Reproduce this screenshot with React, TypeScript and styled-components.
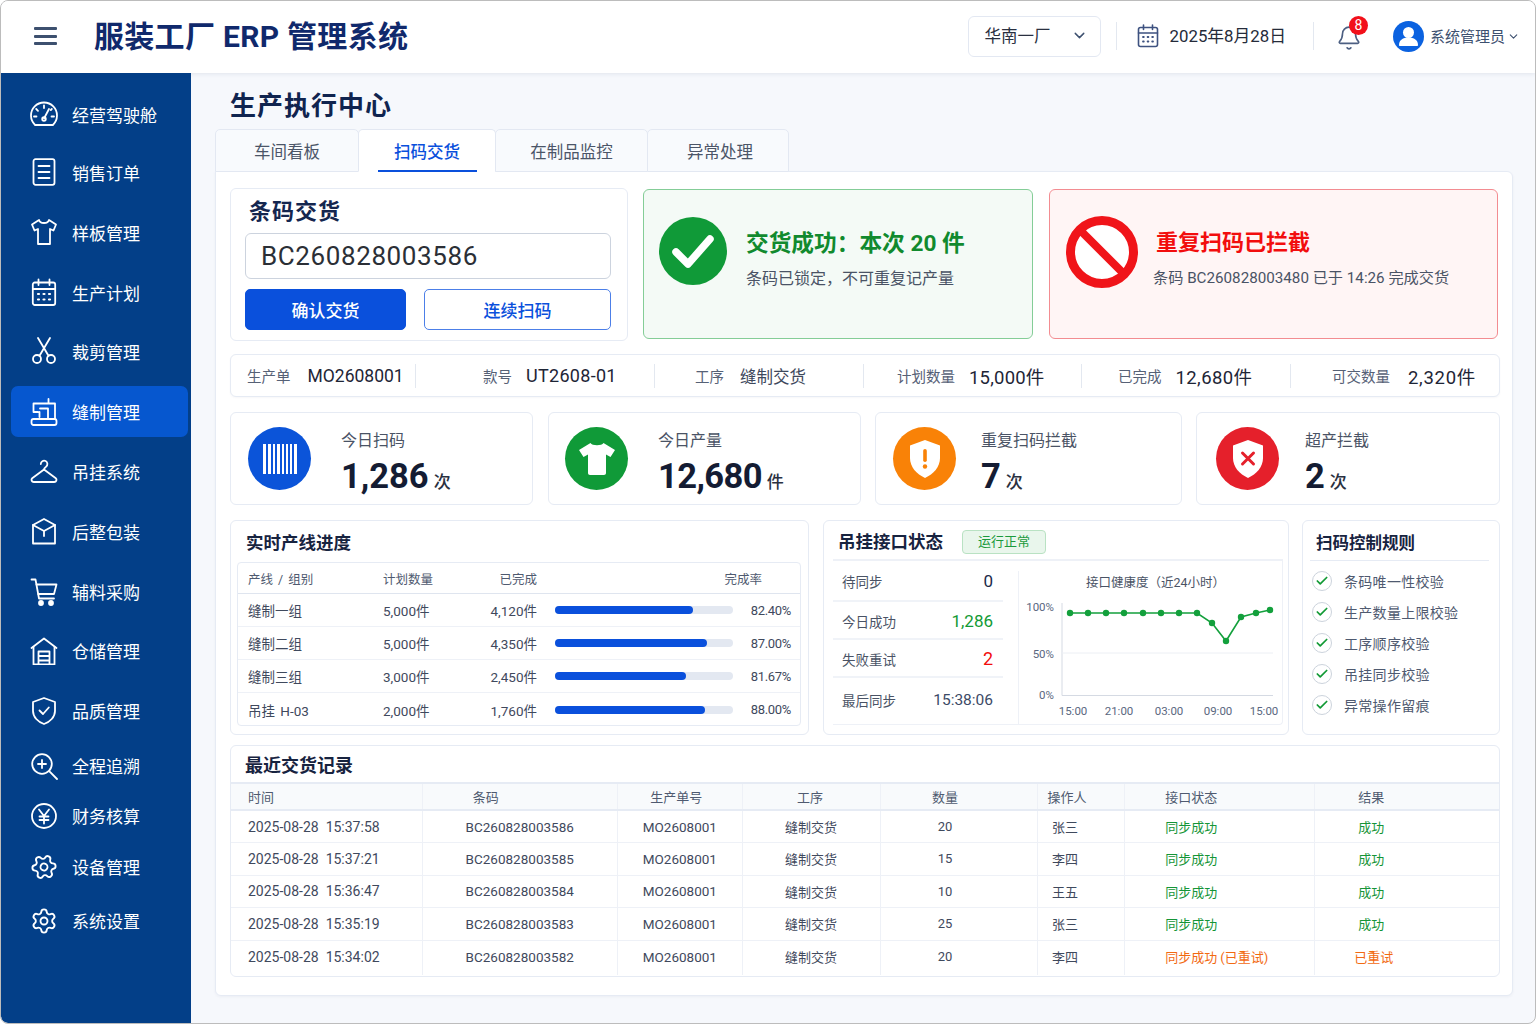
import React from "react";
import styled, { createGlobalStyle } from "styled-components";
import { Bell, ChevronDown, Check, Settings } from "lucide-react";

const GlobalStyle = createGlobalStyle`
  * {
    box-sizing: border-box;
  }
  body {
    margin: 0;
    background: #ffffff;
    font-family: Roboto, "Noto Sans CJK SC", sans-serif;
    color: #1f2a44;
  }
`;

const Frame = styled.div`
  width: 1536px;
  height: 1024px;
  border: 1px solid #bcbcbc;
  border-radius: 8px;
  overflow: hidden;
  display: flex;
  flex-direction: column;
  background: #f6f8fc;
`;

const Header = styled.header`
  height: 72px;
  flex: none;
  display: flex;
  align-items: center;
  padding: 0 15px 2px 33px;
  background: #ffffff;
  box-shadow: 0 1px 4px rgba(40, 60, 100, 0.1);
  position: relative;
  z-index: 1;
`;

const Hamburger = styled.div`
  width: 23px;
  height: 18px;
  display: flex;
  flex-direction: column;
  justify-content: space-between;
  span {
    height: 3px;
    border-radius: 1px;
    background: #3d506f;
  }
`;

const AppTitle = styled.h1`
  margin: 0 0 4px 37px;
  font-size: 30px;
  font-weight: 700;
  letter-spacing: 0.3px;
  color: #10296c;
  white-space: pre;
`;

const HeaderRight = styled.div`
  margin-left: auto;
  display: flex;
  align-items: center;
`;

const PlantSelect = styled.div`
  width: 133px;
  height: 41px;
  display: flex;
  align-items: center;
  justify-content: space-between;
  padding: 0 12px 2px 16px;
  border: 1px solid #e3e8f2;
  border-radius: 6px;
  font-size: 16.5px;
  color: #2a3040;
  svg {
    color: #3d506f;
  }
`;

const HeaderDivider = styled.div<{ $left: number; $right: number }>`
  width: 1px;
  height: 28px;
  background: #e3e8f0;
  margin: 0 ${(p) => p.$right}px 0 ${(p) => p.$left}px;
`;

const DateText = styled.span`
  margin: 0 0 2px 11px;
  font-size: 16.8px;
  color: #252b3a;
  white-space: nowrap;
`;

const BellWrap = styled.div`
  position: relative;
  width: 24px;
  height: 28px;
  margin-top: 5px;
  color: #4c5f82;
`;

const BellBadge = styled.span`
  position: absolute;
  top: -9px;
  left: 13px;
  width: 19px;
  height: 19px;
  border-radius: 50%;
  background: #f2101a;
  color: #ffffff;
  font-size: 14px;
  line-height: 19px;
  text-align: center;
`;

const UserAvatar = styled.svg`
  margin-left: 33px;
  flex: none;
`;

const UserName = styled.span`
  margin: 0 2px 2px 6px;
  font-size: 15px;
  color: #3d506f;
  white-space: nowrap;
`;

const Body = styled.div`
  flex: 1;
  display: flex;
  min-height: 0;
`;

const Sidebar = styled.nav`
  width: 190px;
  flex: none;
  padding-top: 16px;
  background: #033f88;
  border-bottom-left-radius: 7px;
`;

const NavItem = styled.div<{ $gap: number; $active?: boolean }>`
  height: ${(p) => (p.$active ? 51 : 50)}px;
  margin: ${(p) => p.$gap}px 3px 0 10px;
  padding-left: 19px;
  display: flex;
  align-items: center;
  gap: 14px;
  border-radius: 7px;
  background: ${(p) => (p.$active ? "#0657cf" : "transparent")};
  color: #ffffff;
  font-size: 17px;
  svg {
    flex: none;
  }
`;

const Main = styled.main`
  flex: 1;
  min-width: 0;
  padding: 17px 22px 0 24px;
`;

const PageTitle = styled.h2`
  margin: 0 0 7px 15px;
  font-size: 26px;
  line-height: 32px;
  font-weight: 700;
  letter-spacing: 1px;
  color: #10244f;
`;

const Tabs = styled.div`
  display: flex;
  margin-bottom: -1px;
  position: relative;
  z-index: 1;
`;

const Tab = styled.div<{ $width: number; $active?: boolean }>`
  width: ${(p) => p.$width}px;
  height: 43px;
  position: relative;
  display: flex;
  align-items: center;
  justify-content: center;
  margin-left: -1px;
  border: 1px solid #e3e8f2;
  border-bottom: ${(p) => (p.$active ? "1px solid #ffffff" : "1px solid #e3e8f2")};
  border-radius: 5px 5px 0 0;
  background: ${(p) => (p.$active ? "#ffffff" : "#f8fafd")};
  color: ${(p) => (p.$active ? "#0a50dc" : "#4b5568")};
  font-size: 16.5px;
  font-weight: ${(p) => (p.$active ? 500 : 400)};
  &::after {
    content: "";
    display: ${(p) => (p.$active ? "block" : "none")};
    position: absolute;
    left: 19px;
    right: 18px;
    bottom: -1px;
    height: 2px;
    background: #0a50dc;
  }
  &:first-child {
    margin-left: 0;
  }
  &:last-child {
    padding-left: 4px;
  }
`;

const ContentCard = styled.section`
  height: 825px;
  padding: 16px 12px 0 14px;
  background: #ffffff;
  border: 1px solid #e6ebf4;
  border-radius: 0 6px 6px 6px;
  box-shadow: 0 1px 3px rgba(40, 60, 100, 0.05);
`;

const TopRow = styled.div`
  display: grid;
  grid-template-columns: 398px 391px 449px;
  column-gap: 15px;
  height: 153px;
  margin-bottom: 13px;
  & > :nth-child(2) {
    margin-right: 1px;
  }
`;

const Panel = styled.div`
  background: #ffffff;
  border: 1px solid #e6ebf4;
  border-radius: 6px;
`;

const ScanPanel = styled(Panel)`
  padding: 0 16px 0 14px;
`;

const ScanTitle = styled.div`
  margin-left: 4px;
  height: 44px;
  line-height: 46px;
  font-size: 22px;
  font-weight: 700;
  letter-spacing: 1px;
  color: #14264f;
`;

const BarcodeInput = styled.input`
  display: block;
  width: 100%;
  height: 46px;
  padding: 0 15px;
  border: 1px solid #ccd3de;
  border-radius: 6px;
  outline: none;
  font-family: inherit;
  font-size: 26px;
  letter-spacing: 0.6px;
  color: #2b2f36;
`;

const ButtonRow = styled.div`
  display: grid;
  grid-template-columns: 161px 187px;
  column-gap: 18px;
  margin-top: 10px;
`;

const ActionButton = styled.button<{ $primary?: boolean }>`
  height: 41px;
  padding-bottom: 2px;
  border-radius: 5px;
  border: 1px solid ${(p) => (p.$primary ? "#0a50dc" : "#4c7fe8")};
  background: ${(p) => (p.$primary ? "#0a50dc" : "#ffffff")};
  color: ${(p) => (p.$primary ? "#ffffff" : "#0a50dc")};
  font-family: inherit;
  font-size: 17px;
  font-weight: 500;
`;

const ResultPanel = styled.div<{ $tone: "ok" | "bad" }>`
  height: 150px;
  margin-top: 1px;
  display: flex;
  align-items: flex-start;
  padding: ${(p) => (p.$tone === "ok" ? "27px 0 0 15px" : "25px 0 0 16px")};
  gap: ${(p) => (p.$tone === "ok" ? 19 : 15)}px;
  border-radius: 6px;
  border: 1px solid ${(p) => (p.$tone === "ok" ? "#84cd97" : "#f38c91")};
  background: ${(p) => (p.$tone === "ok" ? "#f4faf6" : "#fff5f5")};
`;

const ResultText = styled.div<{ $offset: number }>`
  margin-top: ${(p) => p.$offset}px;
`;

const ResultTitle = styled.div<{ $tone: "ok" | "bad" }>`
  font-size: ${(p) => (p.$tone === "ok" ? 22.7 : 22)}px;
  line-height: 32px;
  font-weight: 700;
  margin-left: ${(p) => (p.$tone === "ok" ? 0 : 3)}px;
  color: ${(p) => (p.$tone === "ok" ? "#118a2e" : "#f20d0d")};
  white-space: pre;
`;

const ResultSub = styled.div<{ $size: number }>`
  margin-top: 8px;
  font-size: ${(p) => p.$size}px;
  line-height: 22px;
  color: #4a5365;
  white-space: pre;
`;

const MetaBar = styled(Panel)`
  height: 43px;
  margin-bottom: 15px;
  display: grid;
  grid-template-columns: 184px 239px 209px 218px 209px 1fr;
  align-items: center;
  box-shadow: 0 1px 2px rgba(40, 60, 100, 0.04);
`;

const MetaCell = styled.div<{ $pad: number; $gap: number; $first?: boolean }>`
  height: 24px;
  display: flex;
  align-items: center;
  padding-left: ${(p) => p.$pad}px;
  gap: ${(p) => p.$gap}px;
  border-left: ${(p) => (p.$first ? "none" : "1px solid #e3e8f0")};
  white-space: nowrap;
`;

const MetaLabel = styled.span`
  font-size: 14.5px;
  color: #566176;
`;

const MetaValue = styled.span<{ $size: number; $spread?: number }>`
  font-size: ${(p) => p.$size}px;
  letter-spacing: ${(p) => p.$spread ?? 0}px;
  color: ${(p) => (p.$size < 17 ? "#3e485c" : "#1e2536")};
`;

const KpiRow = styled.div`
  display: grid;
  grid-template-columns: 304px 313px 307px 304px;
  column-gap: 14px;
  margin-bottom: 15px;
  & > :first-child {
    margin-right: 1px;
  }
`;

const KpiCard = styled(Panel)<{ $pad: number; $gap: number }>`
  height: 93px;
  display: flex;
  align-items: center;
  padding-left: ${(p) => p.$pad}px;
  gap: ${(p) => p.$gap}px;
`;

const KpiCircle = styled.div<{ $color: string }>`
  width: 63px;
  height: 63px;
  flex: none;
  border-radius: 50%;
  background: ${(p) => p.$color};
  display: flex;
  align-items: center;
  justify-content: center;
`;

const KpiText = styled.div`
  margin-top: 16px;
`;

const KpiLabel = styled.div`
  font-size: 16px;
  line-height: 22px;
  color: #4a5365;
`;

const KpiValue = styled.div<{ $tight?: boolean }>`
  display: flex;
  align-items: baseline;
  gap: 5px;
  margin-top: 3px;
  font-size: 34.5px;
  line-height: 42px;
  font-weight: 700;
  letter-spacing: ${(p) => (p.$tight ? -0.6 : 0)}px;
  color: #141c33;
  span {
    font-size: 17px;
    font-weight: 500;
    letter-spacing: 0;
    color: #2a3040;
  }
`;

const MiddleRow = styled.div`
  display: grid;
  grid-template-columns: 580px 466px 198px;
  column-gap: 13px;
  height: 215px;
  margin-bottom: 10px;
  & > :first-child {
    margin-right: 1px;
  }
`;

const SectionTitle = styled.div`
  height: 41px;
  line-height: 44px;
  font-size: 17.5px;
  font-weight: 700;
  color: #17233f;
  white-space: nowrap;
`;

const ProgressCard = styled(Panel)`
  padding: 0 7px 0 6px;
  ${SectionTitle} {
    padding-left: 9px;
  }
`;

const ProgressTable = styled.div`
  height: 164px;
  border: 1px solid #e6ebf4;
  border-radius: 4px;
`;

const ProgressRow = styled.div<{ $head?: boolean }>`
  height: ${(p) => (p.$head ? 31 : 33)}px;
  display: grid;
  grid-template-columns: 135px 90px 64px 196px 58px;
  align-items: center;
  padding-left: 10px;
  border-bottom: 1px solid ${(p) => (p.$head ? "#dfe5ef" : "#eef1f7")};
  font-size: ${(p) => (p.$head ? 12.5 : 13.5)}px;
  word-spacing: 2px;
  color: ${(p) => (p.$head ? "#4f5a70" : "#3f495d")};
  &:last-child {
    border-bottom: none;
  }
`;

const RightCell = styled.div`
  text-align: right;
`;

const RateHead = styled.div`
  grid-column: 4 / 6;
  text-align: right;
  padding-right: 29px;
`;

const BarTrack = styled.div`
  height: 8px;
  margin-left: 18px;
  border-radius: 4px;
  background: #e3e8f1;
`;

const BarFill = styled.div`
  height: 100%;
  border-radius: 4px;
  background: #0a50dc;
`;

const PercentCell = styled(RightCell)`
  font-size: 13px;
  letter-spacing: -0.3px;
  white-space: nowrap;
`;

const StatusCard = styled(Panel)`
  padding: 0 5px 0 9px;
`;

const StatusHead = styled.div`
  display: flex;
  align-items: center;
  gap: 19px;
  height: 40px;
  padding: 4px 0 0 5px;
  border-bottom: 2px solid #eef1f7;
  ${SectionTitle} {
    height: 34px;
    line-height: 34px;
  }
`;

const StatusBadge = styled.span`
  width: 84px;
  height: 24px;
  border: 1px solid #b9e2c3;
  border-radius: 4px;
  background: #e9f6ec;
  color: #1a9a3c;
  font-size: 13px;
  line-height: 22px;
  text-align: center;
`;

const StatusBody = styled.div`
  display: grid;
  grid-template-columns: 170px 1fr;
  column-gap: 15px;
  height: 164px;
  border-right: 1px solid #eef1f7;
  border-bottom: 1px solid #eef1f7;
  border-radius: 0 0 4px 0;
`;

const StatList = styled.div`
  display: grid;
  grid-template-rows: 41px 38px 38px 42px;
`;

const StatRow = styled.div`
  display: flex;
  align-items: center;
  justify-content: space-between;
  padding: 1px 10px 0 9px;
  border-bottom: 2px solid #f0f3f8;
  font-size: 13.5px;
  color: #4a5365;
  &:last-child {
    border-bottom: none;
  }
`;

const StatValue = styled.span<{ $color: string; $size: number }>`
  font-size: ${(p) => p.$size}px;
  color: ${(p) => p.$color};
`;

const ChartBox = styled.div`
  margin-top: 10px;
  border-left: 1px solid #eef1f7;
`;

const ChartTitle = styled.div`
  height: 22px;
  padding-left: 9px;
  line-height: 24px;
  font-size: 12.5px;
  color: #4a5365;
  text-align: center;
`;

const ChartSvg = styled.svg`
  display: block;
`;

const RulesCard = styled(Panel)`
  padding: 0 10px 0 7px;
  ${SectionTitle} {
    padding-left: 6px;
    font-size: 16.5px;
    height: 40px;
    line-height: 46px;
    border-bottom: 1px solid #e6ebf4;
  }
`;

const RuleList = styled.div`
  display: flex;
  flex-direction: column;
  gap: 11px;
  padding: 10px 0 0 2px;
`;

const RuleRow = styled.div`
  display: flex;
  align-items: center;
  gap: 12px;
  height: 20px;
  font-size: 14px;
  letter-spacing: 0.3px;
  color: #4f5a70;
  white-space: nowrap;
`;

const RuleCheck = styled.span`
  width: 20px;
  height: 20px;
  flex: none;
  display: flex;
  align-items: center;
  justify-content: center;
  border: 1px solid #ccd3dc;
  border-radius: 50%;
  color: #129a35;
`;

const RecordCard = styled(Panel)`
  height: 232px;
  overflow: hidden;
`;

const RecordTitle = styled.div`
  height: 36px;
  padding-left: 14px;
  line-height: 40px;
  font-size: 18px;
  font-weight: 700;
  color: #17233f;
`;

const RecordTable = styled.table`
  width: 100%;
  table-layout: fixed;
  border-collapse: collapse;
  font-size: 13.5px;
  color: #3f495d;
  th {
    height: 27px;
    padding-bottom: 2px;
    background: #f8fafc;
    border-top: 2px solid #e6ebf4;
    border-bottom: 2px solid #e6ebf4;
    border-left: 1px solid #eef1f7;
    font-size: 13px;
    font-weight: 400;
    color: #4f5a70;
  }
  td {
    height: 32.5px;
    text-align: center;
    white-space: pre;
    border-top: 1px solid #eef1f7;
    border-left: 1px solid #eef1f7;
  }
  tr:first-child td {
    border-top: none;
  }
  tr:last-child td {
    height: 35px;
    padding-bottom: 3px;
  }
  th:first-child,
  td:first-child {
    border-left: none;
    padding-left: 17px;
    text-align: left;
    font-size: 14px;
  }
  th:first-child {
    font-size: 13px;
  }
  th:nth-child(2) {
    text-align: left;
    padding-left: 50px;
  }
  th:nth-child(3) {
    padding-right: 8px;
  }
  th:nth-child(4) {
    padding-right: 4px;
  }
  td:nth-child(4) {
    padding-right: 2px;
    font-size: 13px;
  }
  th:nth-child(5),
  td:nth-child(5) {
    padding-right: 29px;
    font-size: 13px;
  }
  th:nth-child(6) {
    padding-right: 29px;
  }
  td:nth-child(6) {
    padding-right: 33px;
    font-size: 13px;
  }
  th:nth-child(7),
  td:nth-child(7) {
    text-align: left;
    padding-left: 40px;
  }
  th:nth-child(8),
  td:nth-child(8) {
    text-align: left;
    padding-left: 43px;
  }
`;

const StatusText = styled.span<{ $warn?: boolean; $left?: number }>`
  font-size: 13px;
  color: ${(p) => (p.$warn ? "#f26a12" : "#159537")};
  margin-left: ${(p) => p.$left ?? 0}px;
`;

type IconProps = { children: React.ReactNode };

function NavIcon({ children }: IconProps) {
  return (
    <svg
      width="28"
      height="28"
      viewBox="0 0 28 28"
      fill="none"
      stroke="#ffffff"
      strokeWidth="1.8"
      strokeLinecap="round"
      strokeLinejoin="round"
    >
      {children}
    </svg>
  );
}

const TiltedGear = styled(Settings)`
  transform: rotate(24deg);
`;

const navItems = [
  {
    label: "经营驾驶舱",
    gap: 0,
    icon: (
      <NavIcon>
        <path d="M5.1 25H22.9A13 13 0 1 0 5.1 25Z" />
        <path d="M14 18.5 19 9M14 5.5V8M6.2 9l1.8 1.8M4 16.5h2.5M24 16.5h-2.5M21.8 9l-1 1" />
        <circle cx="14" cy="19" r="1.8" />
      </NavIcon>
    ),
  },
  {
    label: "销售订单",
    gap: 8,
    icon: (
      <NavIcon>
        <rect x="3.5" y="1.2" width="21" height="25.6" rx="2" />
        <path d="M8.5 8h11M8.5 14h11M8.5 20h11" />
      </NavIcon>
    ),
  },
  {
    label: "样板管理",
    gap: 10,
    icon: (
      <NavIcon>
        <path d="M9 2 2 6.5l2.5 6L8 11v15h12V11l3.5 1.5L26 6.5 19 2c-1 4-9 4-10 0Z" />
      </NavIcon>
    ),
  },
  {
    label: "生产计划",
    gap: 10,
    icon: (
      <NavIcon>
        <rect x="2.8" y="4.5" width="22.4" height="22.5" rx="2" />
        <path d="M3 11h22M8.5 1.5v5.5M19.5 1.5v5.5" />
        <path d="M8 16h1M13.5 16h1M19 16h1M8 21.5h1M13.5 21.5h1M19 21.5h1" strokeWidth="2.2" />
      </NavIcon>
    ),
  },
  {
    label: "裁剪管理",
    gap: 9,
    icon: (
      <NavIcon>
        <circle cx="7" cy="22" r="4" />
        <circle cx="21" cy="22" r="4" />
        <path d="M9.5 18.8 20 1M18.5 18.8 8 1" />
      </NavIcon>
    ),
  },
  {
    label: "缝制管理",
    gap: 10,
    active: true,
    icon: (
      <NavIcon>
        <rect x="1.5" y="21" width="25" height="6" rx="2" />
        <path d="M3.5 5.5H25V21M3.5 5.5V14H8M9.5 14v5M18.5 5.5V1M18 21V10.5H10" />
      </NavIcon>
    ),
  },
  {
    label: "吊挂系统",
    gap: 9.5,
    icon: (
      <NavIcon>
        <path d="M10.8 6a3.3 3.3 0 1 1 5.2 2.7c-1.2.8-1.9 1.4-1.9 2.8" />
        <path d="M14 11.5 2.2 20.3C.8 21.5 1.6 24 3.8 24h20.4c2.2 0 3-2.5 1.6-3.7L14 11.5Z" />
      </NavIcon>
    ),
  },
  {
    label: "后整包装",
    gap: 10,
    icon: (
      <NavIcon>
        <path d="M14 1 25 7v18.5H3V7L14 1Z" />
        <path d="M3 7l11 6 11-6M14 13v5" />
      </NavIcon>
    ),
  },
  {
    label: "辅料采购",
    gap: 10,
    icon: (
      <NavIcon>
        <path d="M1.5 1.5H5.5L9 20.5H24" />
        <path d="M6.5 6.5H26.5L24 16H8.2" />
        <circle cx="11" cy="25" r="2" fill="#ffffff" />
        <circle cx="21" cy="25" r="2" fill="#ffffff" />
      </NavIcon>
    ),
  },
  {
    label: "仓储管理",
    gap: 9,
    icon: (
      <NavIcon>
        <path d="M1.5 11 14 1.5 26.5 11" />
        <path d="M3.5 10v17.5h21V10" />
        <path d="M8.5 27V14.5h11V27M8.5 19h11M8.5 23.5h11" />
      </NavIcon>
    ),
  },
  {
    label: "品质管理",
    gap: 10,
    icon: (
      <NavIcon>
        <path d="M14 1 25 5v9c0 6-5 11-11 13C8 25 3 20 3 14V5l11-4Z" />
        <path d="M9.5 13.5 13 17l5.8-6.5" />
      </NavIcon>
    ),
  },
  {
    label: "全程追溯",
    gap: 5,
    icon: (
      <NavIcon>
        <circle cx="12" cy="12" r="9.8" />
        <path d="M19.2 19.2 27 27M12 8v8M8 12h8" />
      </NavIcon>
    ),
  },
  {
    label: "财务核算",
    gap: 0,
    icon: (
      <NavIcon>
        <circle cx="14" cy="14" r="12" />
        <path d="M9 7.5 14 14l5-6.5M14 14v7.5M9.5 14.5h9M9.5 18h9" />
      </NavIcon>
    ),
  },
  { label: "设备管理", gap: 1, icon: <TiltedGear size={28} strokeWidth={1.6} color="#ffffff" /> },
  { label: "系统设置", gap: 4, icon: <Settings size={28} strokeWidth={1.6} color="#ffffff" /> },
];

const metaItems = [
  { label: "生产单", value: "MO2608001", pad: 16, gap: 17, size: 17.5 },
  { label: "款号", value: "UT2608-01", pad: 67, gap: 14, size: 18, spread: 0.3 },
  { label: "工序", value: "缝制交货", pad: 40, gap: 16, size: 16.5 },
  { label: "计划数量", value: "15,000件", pad: 33, gap: 14, size: 18.5, spread: 0.2 },
  { label: "已完成", value: "12,680件", pad: 36, gap: 14, size: 18.5, spread: 0.4 },
  { label: "可交数量", value: "2,320件", pad: 41, gap: 18, size: 18.5, spread: 0.7 },
];

const kpis = [
  {
    label: "今日扫码",
    value: "1,286",
    unit: "次",
    color: "#0b54d9",
    pad: 17,
    gap: 30,
    icon: (
      <svg width="36" height="30" viewBox="0 0 36 30" fill="#ffffff">
        <path d="M1 0h3v30H1zM6 0h3v30H6zM11 0h2v30h-2zM15 0h3v30h-3zM20 0h2v30h-2zM24 0h2v30h-2zM28 0h2v30h-2zM32 0h3v30h-3z" />
      </svg>
    ),
  },
  {
    label: "今日产量",
    value: "12,680",
    unit: "件",
    tight: true,
    color: "#109a38",
    pad: 16,
    gap: 30,
    icon: (
      <svg width="38" height="34" viewBox="0 0 38 34" fill="#ffffff">
        <path d="M12.5 1C14 4 24 4 25.5 1L37 8l-4.5 7-4.5-2.5V31c0 1-.8 2-2 2H12c-1.2 0-2-1-2-2V12.5L5.5 15 1 8l11.5-7Z" />
      </svg>
    ),
  },
  {
    label: "重复扫码拦截",
    value: "7",
    unit: "次",
    color: "#f98207",
    pad: 17,
    gap: 25,
    icon: (
      <svg width="32" height="38" viewBox="0 0 32 38">
        <path d="M16 0 31 5.5V18c0 9-6.5 16-15 20C7.5 34 1 27 1 18V5.5L16 0Z" fill="#ffffff" />
        <rect x="14.2" y="9" width="3.6" height="13" rx="1.8" fill="#f98207" />
        <circle cx="16" cy="26.5" r="2.2" fill="#f98207" />
      </svg>
    ),
  },
  {
    label: "超产拦截",
    value: "2",
    unit: "次",
    color: "#e5202b",
    pad: 19,
    gap: 26,
    icon: (
      <svg width="32" height="38" viewBox="0 0 32 38">
        <path d="M16 0 31 5.5V18c0 9-6.5 16-15 20C7.5 34 1 27 1 18V5.5L16 0Z" fill="#ffffff" />
        <path d="m10.5 13 11 11M21.5 13l-11 11" stroke="#e5202b" strokeWidth="3" strokeLinecap="round" />
      </svg>
    ),
  },
];

const lines = [
  { name: "缝制一组", plan: "5,000件", done: "4,120件", bar: 138, rate: "82.40%" },
  { name: "缝制二组", plan: "5,000件", done: "4,350件", bar: 152, rate: "87.00%" },
  { name: "缝制三组", plan: "3,000件", done: "2,450件", bar: 131, rate: "81.67%" },
  { name: "吊挂 H-03", plan: "2,000件", done: "1,760件", bar: 150, rate: "88.00%" },
];

const stats = [
  { label: "待同步", value: "0", color: "#1c2a4a", size: 17 },
  { label: "今日成功", value: "1,286", color: "#129a35", size: 17 },
  { label: "失败重试", value: "2", color: "#f20d0d", size: 18 },
  { label: "最后同步", value: "15:38:06", color: "#3c4a66", size: 15.5 },
];

const rules = ["条码唯一性校验", "生产数量上限校验", "工序顺序校验", "吊挂同步校验", "异常操作留痕"];

const records = [
  ["2025-08-28  15:37:58", "BC260828003586", "20", "张三"],
  ["2025-08-28  15:37:21", "BC260828003585", "15", "李四"],
  ["2025-08-28  15:36:47", "BC260828003584", "10", "王五"],
  ["2025-08-28  15:35:19", "BC260828003583", "25", "张三"],
  ["2025-08-28  15:34:02", "BC260828003582", "20", "李四"],
];

const columnWidths = [191, 195, 125, 138, 157, 87, 190, 184];

const chartX = [51, 69, 87, 105, 124, 142, 160, 178, 193, 207, 222, 237, 251];
const chartY = [20, 20, 20, 20, 20, 20, 20, 20, 30, 48, 24, 20, 17];

function HealthChart() {
  const axisText = { fontSize: 11.5, fill: "#5a6780" };
  return (
    <ChartSvg width="264" height="132" viewBox="0 0 264 132">
      <path d="M43 10V102.5H254" fill="none" stroke="#d5dae3" strokeWidth="1" />
      <path d="M43 60H254" fill="none" stroke="#eceff4" strokeWidth="1" />
      <g textAnchor="end" {...axisText}>
        <text x="35" y="18">100%</text>
        <text x="35" y="65">50%</text>
        <text x="35" y="106">0%</text>
      </g>
      <g textAnchor="middle" {...axisText}>
        <text x="54" y="122">15:00</text>
        <text x="100" y="122">21:00</text>
        <text x="150" y="122">03:00</text>
        <text x="199" y="122">09:00</text>
        <text x="245" y="122">15:00</text>
      </g>
      <polyline
        points={chartX.map((x, i) => `${x},${chartY[i]}`).join(" ")}
        fill="none"
        stroke="#13a03c"
        strokeWidth="1.6"
      />
      {chartX.map((x, i) => (
        <circle key={x} cx={x} cy={chartY[i]} r="3.2" fill="#13a03c" />
      ))}
    </ChartSvg>
  );
}

export default function App() {
  return (
    <Frame>
      <GlobalStyle />
      <Header>
        <Hamburger>
          <span />
          <span />
          <span />
        </Hamburger>
        <AppTitle>服装工厂 ERP 管理系统</AppTitle>
        <HeaderRight>
          <PlantSelect>
            华南一厂
            <ChevronDown size={17} strokeWidth={2} />
          </PlantSelect>
          <HeaderDivider $left={15} $right={20} />
          <svg width="22" height="24" viewBox="0 0 22 24" fill="none" stroke="#3e5280" strokeWidth="1.6" strokeLinecap="round">
            <rect x="1.5" y="3.5" width="19" height="19" rx="2" />
            <path d="M1.5 9h19M6.5 1v4.5M15.5 1v4.5" />
            <path d="M6 13h.8M10.6 13h.8M15.2 13h.8M6 17.5h.8M10.6 17.5h.8M15.2 17.5h.8" strokeWidth="1.8" />
          </svg>
          <DateText>2025年8月28日</DateText>
          <HeaderDivider $left={27} $right={22} />
          <BellWrap>
            <Bell size={26} strokeWidth={1.5} />
            <BellBadge>8</BellBadge>
          </BellWrap>
          <UserAvatar width="31" height="31" viewBox="0 0 31 31">
            <circle cx="15.5" cy="15.5" r="15.5" fill="#0b62e0" />
            <circle cx="15.5" cy="11.5" r="5.5" fill="#ffffff" />
            <path d="M6 24c0-5 4-7.5 9.5-7.5S25 19 25 24c0 .6-.4 1-1 1H7c-.6 0-1-.4-1-1Z" fill="#ffffff" />
          </UserAvatar>
          <UserName>系统管理员</UserName>
          <ChevronDown size={13} strokeWidth={2} color="#3d506f" />
        </HeaderRight>
      </Header>
      <Body>
        <Sidebar>
          {navItems.map((item) => (
            <NavItem key={item.label} $gap={item.gap} $active={item.active}>
              {item.icon}
              {item.label}
            </NavItem>
          ))}
        </Sidebar>
        <Main>
          <PageTitle>生产执行中心</PageTitle>
          <Tabs>
            <Tab $width={144}>车间看板</Tab>
            <Tab $width={138} $active>扫码交货</Tab>
            <Tab $width={153}>在制品监控</Tab>
            <Tab $width={142}>异常处理</Tab>
          </Tabs>
          <ContentCard>
            <TopRow>
              <ScanPanel>
                <ScanTitle>条码交货</ScanTitle>
                <BarcodeInput readOnly value="BC260828003586" />
                <ButtonRow>
                  <ActionButton $primary>确认交货</ActionButton>
                  <ActionButton>连续扫码</ActionButton>
                </ButtonRow>
              </ScanPanel>
              <ResultPanel $tone="ok">
                <svg width="68" height="68" viewBox="0 0 68 68">
                  <circle cx="34" cy="34" r="34" fill="#109a38" />
                  <path d="M17 35 29 47 51 22" fill="none" stroke="#ffffff" strokeWidth="7.5" strokeLinecap="round" strokeLinejoin="round" />
                </svg>
                <ResultText $offset={11}>
                  <ResultTitle $tone="ok">{"交货成功\uFF1A本次 20 件"}</ResultTitle>
                  <ResultSub $size={16}>{"条码已锁定\uFF0C不可重复记产量"}</ResultSub>
                </ResultText>
              </ResultPanel>
              <ResultPanel $tone="bad">
                <svg width="72" height="74" viewBox="0 0 72 74">
                  <circle cx="36" cy="37" r="31.5" fill="#ffffff" stroke="#f01419" strokeWidth="9" />
                  <path d="M14 15 58 59" stroke="#f01419" strokeWidth="8" />
                </svg>
                <ResultText $offset={12}>
                  <ResultTitle $tone="bad">重复扫码已拦截</ResultTitle>
                  <ResultSub $size={15.2}>条码 BC260828003480 已于 14:26 完成交货</ResultSub>
                </ResultText>
              </ResultPanel>
            </TopRow>

            <MetaBar>
              {metaItems.map((m, i) => (
                <MetaCell key={m.label} $pad={m.pad} $gap={m.gap} $first={i === 0}>
                  <MetaLabel>{m.label}</MetaLabel>
                  <MetaValue $size={m.size} $spread={m.spread}>{m.value}</MetaValue>
                </MetaCell>
              ))}
            </MetaBar>

            <KpiRow>
              {kpis.map((k) => (
                <KpiCard key={k.label} $pad={k.pad} $gap={k.gap}>
                  <KpiCircle $color={k.color}>{k.icon}</KpiCircle>
                  <KpiText>
                    <KpiLabel>{k.label}</KpiLabel>
                    <KpiValue $tight={k.tight}>
                      {k.value}
                      <span>{k.unit}</span>
                    </KpiValue>
                  </KpiText>
                </KpiCard>
              ))}
            </KpiRow>

            <MiddleRow>
              <ProgressCard>
                <SectionTitle>实时产线进度</SectionTitle>
                <ProgressTable>
                  <ProgressRow $head>
                    <div>产线 / 组别</div>
                    <div>计划数量</div>
                    <RightCell>已完成</RightCell>
                    <RateHead>完成率</RateHead>
                  </ProgressRow>
                  {lines.map((l) => (
                    <ProgressRow key={l.name}>
                      <div>{l.name}</div>
                      <div>{l.plan}</div>
                      <RightCell>{l.done}</RightCell>
                      <BarTrack>
                        <BarFill style={{ width: l.bar }} />
                      </BarTrack>
                      <PercentCell>{l.rate}</PercentCell>
                    </ProgressRow>
                  ))}
                </ProgressTable>
              </ProgressCard>

              <StatusCard>
                <StatusHead>
                  <SectionTitle>吊挂接口状态</SectionTitle>
                  <StatusBadge>运行正常</StatusBadge>
                </StatusHead>
                <StatusBody>
                  <StatList>
                    {stats.map((s) => (
                      <StatRow key={s.label}>
                        {s.label}
                        <StatValue $color={s.color} $size={s.size}>{s.value}</StatValue>
                      </StatRow>
                    ))}
                  </StatList>
                  <ChartBox>
                    <ChartTitle>{"接口健康度\uFF08近24小时\uFF09"}</ChartTitle>
                    <HealthChart />
                  </ChartBox>
                </StatusBody>
              </StatusCard>

              <RulesCard>
                <SectionTitle>扫码控制规则</SectionTitle>
                <RuleList>
                  {rules.map((r) => (
                    <RuleRow key={r}>
                      <RuleCheck>
                        <Check size={14} strokeWidth={3} />
                      </RuleCheck>
                      {r}
                    </RuleRow>
                  ))}
                </RuleList>
              </RulesCard>
            </MiddleRow>

            <RecordCard>
              <RecordTitle>最近交货记录</RecordTitle>
              <RecordTable>
                <colgroup>
                  {columnWidths.map((w, i) => (
                    <col key={i} width={w} />
                  ))}
                </colgroup>
                <thead>
                  <tr>
                    <th>时间</th>
                    <th>条码</th>
                    <th>生产单号</th>
                    <th>工序</th>
                    <th>数量</th>
                    <th>操作人</th>
                    <th>接口状态</th>
                    <th>结果</th>
                  </tr>
                </thead>
                <tbody>
                  {records.map((r, i) => {
                    const retried = i === records.length - 1;
                    return (
                      <tr key={r[1]}>
                        <td>{r[0]}</td>
                        <td>{r[1]}</td>
                        <td>MO2608001</td>
                        <td>缝制交货</td>
                        <td>{r[2]}</td>
                        <td>{r[3]}</td>
                        <td>
                          <StatusText $warn={retried}>{retried ? "同步成功 (已重试)" : "同步成功"}</StatusText>
                        </td>
                        <td>
                          <StatusText $warn={retried} $left={retried ? -4 : 0}>{retried ? "已重试" : "成功"}</StatusText>
                        </td>
                      </tr>
                    );
                  })}
                </tbody>
              </RecordTable>
            </RecordCard>
          </ContentCard>
        </Main>
      </Body>
    </Frame>
  );
}
